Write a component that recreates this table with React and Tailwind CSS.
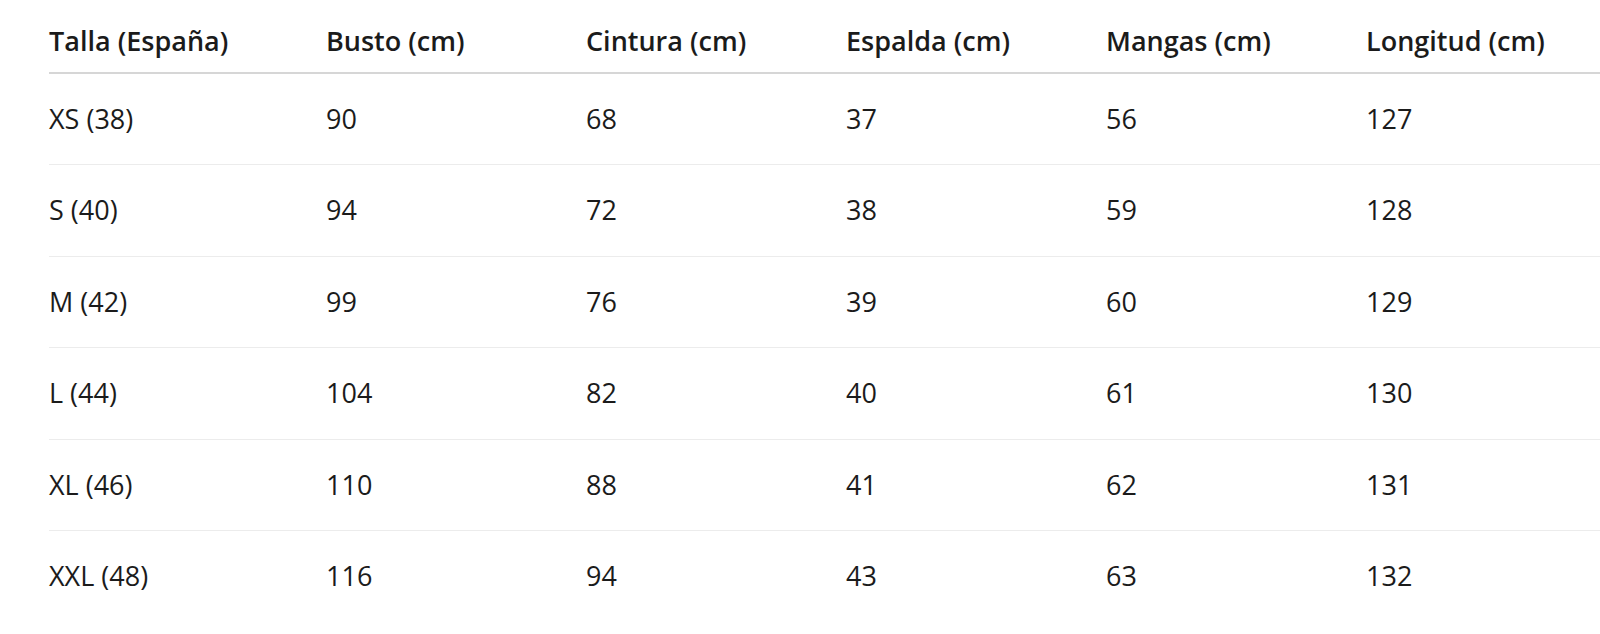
const headers = ['Talla (España)', 'Busto (cm)', 'Cintura (cm)', 'Espalda (cm)', 'Mangas (cm)', 'Longitud (cm)']

const rows = [
  ['XS (38)', '90', '68', '37', '56', '127'],
  ['S (40)', '94', '72', '38', '59', '128'],
  ['M (42)', '99', '76', '39', '60', '129'],
  ['L (44)', '104', '82', '40', '61', '130'],
  ['XL (46)', '110', '88', '41', '62', '131'],
  ['XXL (48)', '116', '94', '43', '63', '132'],
]

export default function App() {
  return (
    <div className="w-[1600px] h-[634px] overflow-hidden bg-white pl-[49px] font-['Open_Sans',sans-serif] text-[#1b1b1b]">
      <table className="w-[1577px] table-fixed border-collapse text-left text-[27px] leading-[1.5]">
        <colgroup>
          <col className="w-[277px]" />
          <col className="w-[260px]" />
          <col className="w-[260px]" />
          <col className="w-[260px]" />
          <col className="w-[260px]" />
          <col className="w-[260px]" />
        </colgroup>
        <thead>
          <tr className="border-b-2 border-[#d6d6d6]">
            {headers.map((h) => (
              <th key={h} className="pt-[21px] pb-[10px] font-semibold whitespace-nowrap">
                {h}
              </th>
            ))}
          </tr>
        </thead>
        <tbody>
          {rows.map((r, i) => (
            <tr key={r[0]} className={i < rows.length - 1 ? 'border-b border-[#ececec]' : ''}>
              {r.map((c, j) => (
                <td key={j} className="py-[25px] font-normal whitespace-nowrap">
                  {c}
                </td>
              ))}
            </tr>
          ))}
        </tbody>
      </table>
    </div>
  )
}
